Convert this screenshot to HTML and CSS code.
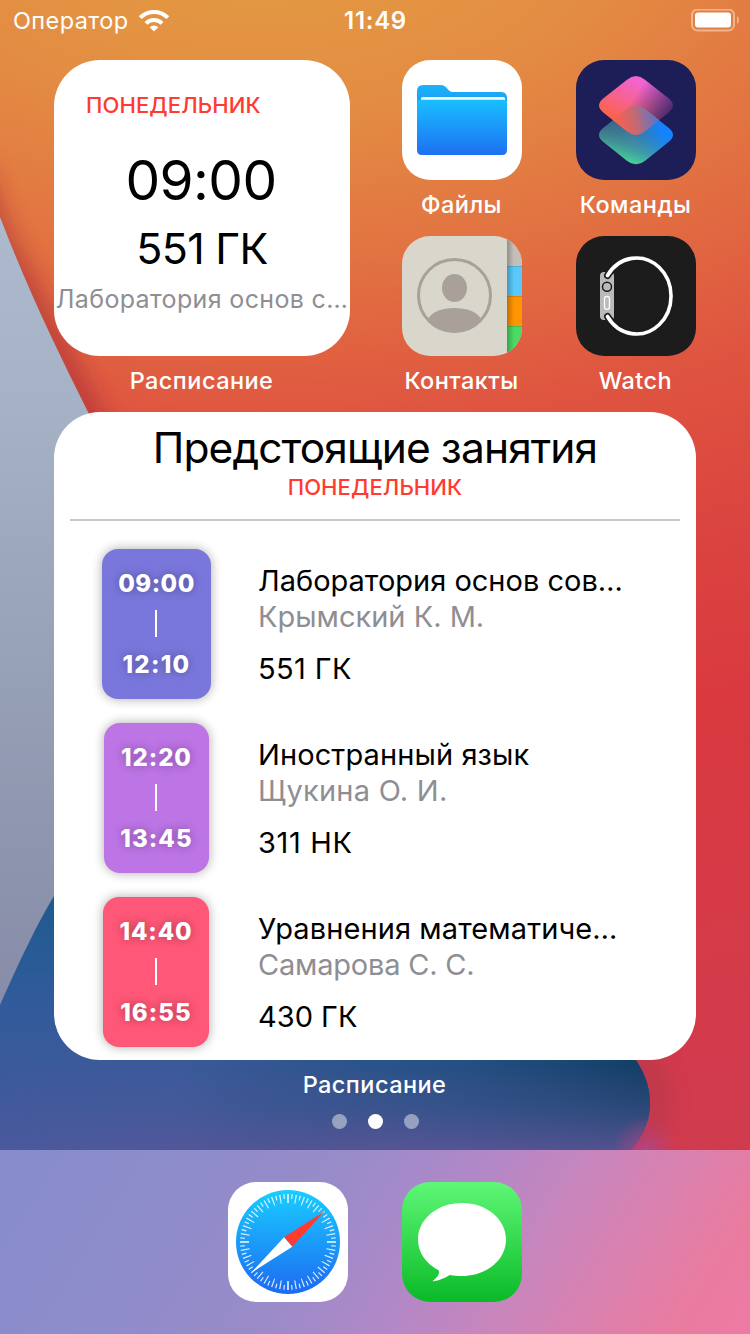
FILE: index.html
```html
<!DOCTYPE html>
<html lang="ru">
<head>
<meta charset="utf-8">
<title>Расписание</title>
<link rel="stylesheet" href="styles.css">
</head>
<body>
<div class="phone">
  <svg class="wallpaper" viewBox="0 0 750 1334" aria-hidden="true">
    <defs>
      <radialGradient id="warm" gradientUnits="userSpaceOnUse" cx="0" cy="0" r="1" gradientTransform="translate(260 -100) scale(2150 1240)">
        <stop offset=".08" stop-color="#e39742"/>
        <stop offset=".17" stop-color="#e38c43"/>
        <stop offset=".28" stop-color="#e27542"/>
        <stop offset=".42" stop-color="#df5540"/>
        <stop offset=".54" stop-color="#db453f"/>
        <stop offset=".68" stop-color="#d9393f"/>
        <stop offset="1" stop-color="#d13b4e"/>
      </radialGradient>
      <linearGradient id="slate" x1="0" y1="217" x2="0" y2="1005" gradientUnits="userSpaceOnUse">
        <stop offset="0" stop-color="#adb9cc"/>
        <stop offset=".25" stop-color="#a5b1c5"/>
        <stop offset=".6" stop-color="#959fb5"/>
        <stop offset="1" stop-color="#878ca8"/>
      </linearGradient>
      <linearGradient id="deep" x1="0" y1="890" x2="0" y2="1160" gradientUnits="userSpaceOnUse">
        <stop offset="0" stop-color="#1d5a8e"/>
        <stop offset=".4" stop-color="#305b9a"/>
        <stop offset=".7" stop-color="#3d5a9b"/>
        <stop offset="1" stop-color="#4b5a9f"/>
      </linearGradient>
      <linearGradient id="night" x1="180" y1="0" x2="640" y2="0" gradientUnits="userSpaceOnUse">
        <stop offset="0" stop-color="#174a74" stop-opacity="0"/>
        <stop offset=".55" stop-color="#1b4d7c" stop-opacity=".65"/>
        <stop offset="1" stop-color="#133f66"/>
      </linearGradient>
      <linearGradient id="violet" x1="0" y1="1065" x2="0" y2="1155" gradientUnits="userSpaceOnUse">
        <stop offset="0" stop-color="#5c5292" stop-opacity="0"/>
        <stop offset=".4" stop-color="#4c5592" stop-opacity=".35"/>
        <stop offset="1" stop-color="#5f5596" stop-opacity=".9"/>
      </linearGradient>
      <linearGradient id="reach" x1="0" y1="0" x2="380" y2="0" gradientUnits="userSpaceOnUse">
        <stop offset="0" stop-color="#fff" stop-opacity=".1"/>
        <stop offset="1" stop-color="#fff"/>
      </linearGradient>
      <mask id="reachmask"><rect y="1050" width="750" height="120" fill="url(#reach)"/></mask>
      <radialGradient id="glow" gradientUnits="userSpaceOnUse" cx="646" cy="1150" r="34">
        <stop offset="0" stop-color="#ad4a8c" stop-opacity=".85"/>
        <stop offset=".4" stop-color="#b0458a" stop-opacity=".45"/>
        <stop offset="1" stop-color="#c04070" stop-opacity="0"/>
      </radialGradient>
      <filter id="soft" filterUnits="userSpaceOnUse" x="-100" y="0" width="950" height="1334"><feGaussianBlur stdDeviation="12"/></filter>
    </defs>
    <rect width="750" height="1334" fill="url(#warm)"/>
    <path d="M-24 170L0 240C28 290 58 352 88 412L130 500" fill="none" stroke="#9c2334" stroke-width="20" opacity=".65" filter="url(#soft)"/>
    <path d="M0 217C28 290 58 352 88 412L300 860L0 1010Z" fill="url(#slate)"/>
    <path d="M615 1020Q662 1070 656 1108Q650 1140 620 1160" fill="none" stroke="#93304a" stroke-width="20" opacity=".4" filter="url(#soft)"/>
    <path d="M0 1005C18 964 38 922 54 896L120 830L560 1000C600 1020 620 1040 636 1060C647 1077 650 1090 650 1104C650 1124 640 1142 622 1160H0Z" fill="url(#deep)"/>
    <path d="M54 896L560 1000C600 1020 620 1040 636 1060C647 1077 650 1090 650 1104C650 1124 640 1142 622 1160H54Z" fill="url(#night)"/>
    <path d="M0 1060H636C647 1077 650 1090 650 1104C650 1124 640 1142 622 1160H0Z" fill="url(#violet)" mask="url(#reachmask)"/>
    <circle cx="646" cy="1150" r="34" fill="url(#glow)"/>
  </svg>

  <header class="status">
    <div class="status-side">
      <span class="carrier">Оператор</span>
      <svg class="wifi" width="30" height="22" viewBox="0 0 30 22" fill="#fff">
        <path d="M15 21.500L10.700 17.200A6.100 6.100 0 0 1 19.300 17.200Z"/>
        <g fill="none" stroke="#fff" stroke-width="4"><path d="M6.900 13.400A11.500 11.500 0 0 1 23.100 13.400M1.200 7.700A19.500 19.500 0 0 1 28.800 7.700"/></g>
      </svg>
    </div>
    <span class="clock">11:49</span>
    <div class="status-side end">
      <svg width="50" height="24" viewBox="0 0 50 24">
        <rect x="3" y="0.500" width="42" height="21" rx="5.500" fill="none" stroke="#fff" stroke-width="2" opacity=".42"/>
        <rect x="6" y="3.500" width="36" height="15" rx="3" fill="#fff"/>
        <path d="M48 7Q50 8.500 50 11T48 15Z" fill="#fff" opacity=".45"/>
      </svg>
    </div>
  </header>

  <main class="home">
    <section class="top">
      <div class="cell">
        <article class="widget small">
          <p class="day">ПОНЕДЕЛЬНИК</p>
          <p class="start">09:00</p>
          <p class="hall">551 ГК</p>
          <p class="subject">Лаборатория основ с…</p>
        </article>
        <p class="label">Расписание</p>
      </div>
      <div class="apps">
        <div class="cell">
          <svg class="icon" viewBox="0 0 120 120">
            <defs>
              <linearGradient id="fb" x1="0" y1="0" x2="0" y2="1"><stop offset="0" stop-color="#1cb2fa"/><stop offset="1" stop-color="#1a98f0"/></linearGradient>
              <linearGradient id="ff" x1="0" y1="0" x2="0" y2="1"><stop offset="0" stop-color="#19bfff"/><stop offset="1" stop-color="#1e70f2"/></linearGradient>
            </defs>
            <rect width="120" height="120" fill="#fff"/>
            <path d="M15 31Q15 25 21 25H38.500C41 25 42.300 25.700 44 27.300L46.500 29.900C48 31.400 49.300 32 51.500 32H99Q105 32 105 38V50H15Z" fill="url(#fb)"/>
            <path d="M19 41V38.500Q19 37 20.500 37H101.500Q103 37 103 38.500V41Z" fill="#f2f8fc"/>
            <path d="M15 41Q17 39.700 19 39.700H101Q104 39.700 105 41V90Q105 95 100 95H20Q15 95 15 90Z" fill="url(#ff)"/>
          </svg>
          <p class="label">Файлы</p>
        </div>
        <div class="cell">
          <svg class="icon" viewBox="0 0 120 120">
            <defs>
              <path id="tile" d="M51 19.700Q60 12.500 69 19.700L92.500 38.300Q101.500 45.500 92.500 52.700L69 71.300Q60 78.500 51 71.300L27.500 52.700Q18.500 45.500 27.500 38.300Z"/>
              <linearGradient id="c1" gradientUnits="userSpaceOnUse" x1="62" y1="18" x2="38" y2="60"><stop offset="0" stop-color="#f164d8"/><stop offset=".55" stop-color="#f6628c"/><stop offset="1" stop-color="#fc6248"/></linearGradient>
              <linearGradient id="c2" gradientUnits="userSpaceOnUse" x1="60" y1="34" x2="92" y2="54"><stop offset="0" stop-color="#fff"/><stop offset="1" stop-color="#fff" stop-opacity=".22"/></linearGradient>
              <mask id="fade"><rect width="120" height="120" fill="url(#c2)"/></mask>
              <linearGradient id="c3" gradientUnits="userSpaceOnUse" x1="24" y1="45" x2="97" y2="45"><stop offset="0" stop-color="#38506f"/><stop offset=".45" stop-color="#3a74a2"/><stop offset=".85" stop-color="#1483ff"/></linearGradient>
              <linearGradient id="c4" gradientUnits="userSpaceOnUse" x1="54" y1="75" x2="68" y2="36"><stop offset="0" stop-color="#49dd93"/><stop offset=".4" stop-color="#45a8a0" stop-opacity=".65"/><stop offset="1" stop-color="#3b80a0" stop-opacity="0"/></linearGradient>
              <clipPath id="tileclip"><use href="#tile"/></clipPath>
              <linearGradient id="c5" gradientUnits="userSpaceOnUse" x1="44" y1="36" x2="80" y2="28"><stop offset="0" stop-color="#f16154"/><stop offset=".45" stop-color="#c46a74"/><stop offset="1" stop-color="#5a75c8"/></linearGradient>
            </defs>
            <rect width="120" height="120" fill="#1d1d58"/>
            <use href="#tile" y="29.400" fill="url(#c3)"/>
            <use href="#tile" y="29.400" fill="url(#c4)"/>
            <use href="#tile" fill="url(#c1)" mask="url(#fade)"/>
            <g clip-path="url(#tileclip)"><use href="#tile" y="29.400" fill="url(#c5)"/></g>
          </svg>
          <p class="label">Команды</p>
        </div>
        <div class="cell">
          <svg class="icon" viewBox="0 0 120 120">
            <defs>
              <clipPath id="disc"><circle cx="52.500" cy="59.500" r="37"/></clipPath>
              <linearGradient id="edge" x1="0" x2="1" y1="0" y2="0"><stop offset="0" stop-opacity=".25"/><stop offset="1" stop-opacity="0"/></linearGradient>
            </defs>
            <rect width="120" height="120" fill="#d9d6cc"/>
            <rect x="105" width="15" height="30" fill="#c4c0b8"/>
            <rect x="105" y="30" width="15" height="30" fill="#5ac8fa"/>
            <rect x="105" y="60" width="15" height="30" fill="#ff9500"/>
            <rect x="105" y="90" width="15" height="30" fill="#4cd964"/>
            <path d="M105 30.500H120M105 60.500H120M105 90.500H120" stroke="#000" opacity=".12"/>
            <rect x="105" width="7" height="120" fill="url(#edge)"/>
            <circle cx="52.500" cy="59.500" r="36" fill="none" stroke="#a9a199" stroke-width="3"/>
            <ellipse cx="52.500" cy="52" rx="12.500" ry="14" fill="#a9a199"/>
            <path clip-path="url(#disc)" d="M25 85C29 75 41 72 52.500 72S76 75 80 85V100H25Z" fill="#a9a199"/>
          </svg>
          <p class="label">Контакты</p>
        </div>
        <div class="cell">
          <svg class="icon" viewBox="0 0 120 120">
            <rect width="120" height="120" fill="#1c1c1c"/>
            <rect x="24" y="36" width="14" height="48" rx="4" fill="#b9baba"/>
            <path d="M31.500 39.500A34.500 38 0 1 1 31.500 80.500" fill="none" stroke="#1c1c1c" stroke-width="7" stroke-linecap="round"/>
            <path d="M31.500 39.500A34.500 38 0 1 1 31.500 80.500" fill="none" stroke="#fff" stroke-width="3.600" stroke-linecap="round"/>
            <circle cx="31" cy="50.700" r="4.500" fill="none" stroke="#1c1c1c" stroke-width="1.500"/>
            <rect x="28.500" y="60.300" width="5" height="13" rx="2.500" fill="#b9baba" stroke="#fff" stroke-width="1.300"/>
          </svg>
          <p class="label">Watch</p>
        </div>
      </div>
    </section>

    <section class="cell">
      <article class="widget large">
        <h1 class="title">Предстоящие занятия</h1>
        <p class="day">ПОНЕДЕЛЬНИК</p>
        <hr class="rule">
        <ul class="lessons">
          <li class="lesson">
            <div class="slot indigo"><time class="t1">09:00</time><i class="bar"></i><time class="t2">12:10</time></div>
            <div class="info"><p>Лаборатория основ сов…</p><p class="teacher">Крымский К. М.</p><p class="room r1">551 ГК</p></div>
          </li>
          <li class="lesson">
            <div class="slot purple"><time>12:20</time><i class="bar"></i><time class="t3">13:45</time></div>
            <div class="info"><p class="loose">Иностранный язык</p><p class="teacher wide">Щукина О. И.</p><p class="room r2">311 НК</p></div>
          </li>
          <li class="lesson">
            <div class="slot pink"><time>14:40</time><i class="bar"></i><time class="t3">16:55</time></div>
            <div class="info"><p class="loose">Уравнения математиче…</p><p class="teacher tight">Самарова С. С.</p><p class="room r3">430 ГК</p></div>
          </li>
        </ul>
      </article>
      <p class="label">Расписание</p>
    </section>

    <nav class="dots"><i></i><i class="on"></i><i></i></nav>
  </main>

  <footer class="dock">
    <svg class="icon" viewBox="0 0 120 120">
      <defs><linearGradient id="sky" x1="0" y1="0" x2="0" y2="1"><stop offset="0" stop-color="#19cdff"/><stop offset="1" stop-color="#1d6af2"/></linearGradient></defs>
      <rect width="120" height="120" fill="#fff"/>
      <circle cx="60" cy="60" r="52" fill="url(#sky)"/>
      <g fill="none" stroke="#fff" opacity=".85">
        <circle cx="60" cy="60" r="45.500" stroke-width="4.800" pathLength="360" stroke-dasharray="1.500 8.500" stroke-dashoffset="-4.250"/>
        <circle cx="60" cy="60" r="43.400" stroke-width="9" pathLength="360" stroke-dasharray="1.500 8.500" stroke-dashoffset=".750"/>
      </g>
      <path d="M60 12V21M60 99V108M12 60H21M99 60H108" stroke="#fff" stroke-width="2" opacity=".5"/>
      <path d="M97 29L56 55.300L64.300 64.700Z" fill="#ff3b30"/>
      <path d="M23.300 90.700L56 55.300L64.300 64.700Z" fill="#fff"/>
    </svg>
    <svg class="icon" viewBox="0 0 120 120">
      <defs><linearGradient id="lime" x1="0" y1="0" x2="0" y2="1"><stop offset="0" stop-color="#5ff777"/><stop offset="1" stop-color="#0aba27"/></linearGradient></defs>
      <rect width="120" height="120" fill="url(#lime)"/>
      <path d="M60 21C84.500 21 104 37 104 57.500S84.500 94 60 94C56 94 51.500 93.600 47.800 93C42.500 96 37 98.800 31.500 99.200C30.800 99.200 31 98.600 31.500 98.200C35 95.500 38.500 91 36.500 88.300C24 81.500 16 70.500 16 57.500C16 37 35.500 21 60 21Z" fill="#fff"/>
    </svg>
  </footer>
</div>
</body>
</html>
```
FILE: styles.css
```css
* { box-sizing: border-box; }
body, p, h1, ul { margin: 0; padding: 0; }
body { font-family: Inter, "Noto Sans", sans-serif; color: #000; }

.phone {
  position: relative;
  isolation: isolate;
  width: 750px;
  height: 1334px;
  display: flex;
  flex-direction: column;
  overflow: hidden;
}
.wallpaper { position: absolute; inset: 0; z-index: -1; width: 750px; height: 1334px; }

/* Status bar */
.status {
  height: 40px;
  padding: 1px 12px 0 13px;
  display: flex;
  align-items: center;
  color: #fff;
}
.status-side { flex: 1; display: flex; align-items: center; gap: 10px; }
.status-side.end { justify-content: flex-end; margin-right: -1px; }
.carrier { font-size: 23.5px; letter-spacing: .4px; line-height: 41px; }
.clock { font-size: 24px; font-weight: 600; letter-spacing: .7px; line-height: 41px; margin-left: -1px; }

/* Home screen */
.home { flex: 1; padding: 20px 54px 0; display: flex; flex-direction: column; }
.top { display: flex; justify-content: space-between; margin-bottom: 17.5px; }
.apps { display: grid; grid-template-columns: 120px 120px; gap: 17.5px 54px; }
.cell { display: flex; flex-direction: column; align-items: center; }
.icon { display: block; width: 120px; height: 120px; border-radius: 28px; flex: none; }
.label {
  margin-top: 10.5px;
  margin-right: 1px;
  font-size: 23.5px;
  font-weight: 500;
  line-height: 28px;
  letter-spacing: .45px;
  color: #fff;
  white-space: nowrap;
}

/* Widgets */
.widget { background: #fff; border-radius: 46px; display: flex; flex-direction: column; align-items: center; white-space: nowrap; }
.day { color: #ff3b30; font-size: 22px; font-weight: 500; letter-spacing: .1px; }
.small { width: 296px; height: 296px; padding-top: 31px; }
.small .day { align-self: flex-start; margin-left: 32px; line-height: 28px; }
.start { margin: 28px 2px 0 0; font-size: 55px; line-height: 66px; letter-spacing: -.6px; }
.hall { margin-top: 9px; font-size: 43px; line-height: 52px; letter-spacing: -.7px; }
.subject { margin-top: 9px; font-size: 25px; line-height: 32px; letter-spacing: .35px; color: #8e8e93; }

.large { width: 642px; height: 648px; padding-top: 10.5px; }
.title { font-size: 42.5px; font-weight: 400; line-height: 50px; letter-spacing: -.9px; }
.large .day { margin-top: 1.5px; line-height: 26px; }
.rule { width: 610px; height: 2px; margin: 19px 0 28px; border: 0; background: #c6c6c8; }
.lessons { list-style: none; align-self: stretch; padding-left: 48px; display: grid; gap: 24px; }
.lesson { display: grid; grid-template-columns: 109px auto; column-gap: 47px; align-items: center; }

.slot {
  justify-self: center;
  height: 150px;
  padding-top: 21px;
  border-radius: 16px;
  box-shadow: 0 0 11px rgba(0, 0, 0, .33);
  display: flex;
  flex-direction: column;
  align-items: center;
  color: #fff;
  font-size: 24px;
  font-weight: 800;
  line-height: 28px;
  letter-spacing: .9px;
  text-shadow: 0 0 10px rgba(0, 0, 0, .33);
}
.indigo { width: 109px; background: #7977dc; }
.purple { width: 105px; background: #bd74e5; }
.pink { width: 106px; margin-right: 1px; background: #ff5777; }
.t1 { letter-spacing: .5px; }
.t2 { letter-spacing: 1.3px; }
.t3 { letter-spacing: 1.1px; }
.bar { width: 2px; height: 27px; margin: 12px 1px 14px 0; background: #fff; }

.info { padding-top: 2px; font-size: 29px; line-height: 36px; }
.loose { letter-spacing: .1px; }
.teacher { color: #8e8e93; }
.teacher.wide { letter-spacing: .25px; }
.teacher.tight { letter-spacing: -.2px; }
.room { margin-top: 16px; }
.r1 { letter-spacing: .4px; }
.r2 { letter-spacing: .65px; }
.r3 { letter-spacing: 0; }

.dots { margin-top: 15.5px; display: flex; justify-content: center; gap: 21px; }
.dots i { width: 15px; height: 15px; border-radius: 50%; background: rgba(255, 255, 255, .45); }
.dots .on { background: #fff; }

/* Dock */
.dock {
  height: 184px;
  padding-top: 32px;
  display: flex;
  justify-content: center;
  gap: 54px;
  background: linear-gradient(122deg, #878ccb 0%, #8f8ccc 24%, #998bc8 42%, #b088c8 56%, #c486bf 67%, #d881b0 79%, #e97b9f 91%, #ee7aa4 100%);
}
```
